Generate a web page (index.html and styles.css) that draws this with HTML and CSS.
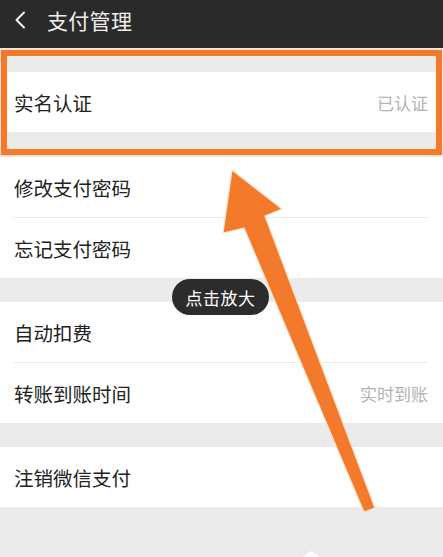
FILE: index.html
```html
<!DOCTYPE html>
<html lang="zh-CN">
<head>
<meta charset="utf-8">
<title>支付管理</title>
<link rel="stylesheet" href="styles.css">
</head>
<body>
<div class="page">
  <header class="header">
    <svg class="back" width="14" height="18" viewBox="0 0 14 18"><path d="M11 1.5 L3.5 9 L11 16.5" fill="none" stroke="#f2f2f2" stroke-width="2" stroke-linecap="round" stroke-linejoin="round"/></svg>
    <span class="title">支付管理</span>
  </header>

  <div class="gap"></div>
  <div class="group">
    <div class="row"><span>实名认证</span><span class="value">已认证</span></div>
  </div>

  <div class="gap gap-tall"></div>
  <div class="group">
    <div class="row"><span>修改支付密码</span></div>
    <div class="sep"></div>
    <div class="row"><span>忘记支付密码</span></div>
  </div>

  <div class="gap"></div>
  <div class="group">
    <div class="row"><span>自动扣费</span></div>
    <div class="sep"></div>
    <div class="row"><span>转账到账时间</span><span class="value">实时到账</span></div>
  </div>

  <div class="gap"></div>
  <div class="group">
    <div class="row"><span>注销微信支付</span></div>
  </div>

  <div class="highlight"></div>
  <div class="tooltip">点击放大</div>

  <svg class="arrow" width="443" height="557" viewBox="0 0 443 557">
    <path d="M232 170 L282 209 L265 216 L375 508 L364 512 L244 228 L223 233 Z" fill="#f47a2b" stroke="#fde2cc" stroke-width="1.2" stroke-linejoin="round"/>
    <path d="M303 557 L311 551 L320 557 Z" fill="#ffffff"/>
  </svg>
</div>
</body>
</html>
```

FILE: styles.css
```css
* { box-sizing: border-box; }

html, body {
  margin: 0;
  padding: 0;
}

body {
  background: #ebebeb;
  font-family: "Noto Sans CJK SC", "Noto Sans", sans-serif;
  width: 443px;
  height: 557px;
  overflow: hidden;
}

.page {
  position: relative;
  width: 443px;
  height: 557px;
  background: #ebebeb;
}

.header {
  height: 48px;
  background: #2a2a2a;
  display: flex;
  align-items: center;
  padding: 0 0 7px 13px;
  gap: 20px;
  border-bottom: 1px solid #1f1f1f;
}

.back {
  display: block;
  flex: none;
}

.title {
  color: #f0f0f0;
  font-size: 21px;
  letter-spacing: 0.3px;
  line-height: 1;
}

.gap {
  height: 24px;
}

.gap-tall {
  height: 25px;
}

.group {
  background: #ffffff;
}

.row {
  height: 60px;
  padding: 0 15px 0 14px;
  display: flex;
  align-items: center;
  justify-content: space-between;
  font-size: 19.5px;
  color: #222222;
}

.value {
  font-size: 17px;
  color: #b3b3b3;
}

.sep {
  height: 1px;
  margin: 0 15px 0 14px;
  background: #ececec;
}

.highlight {
  position: absolute;
  left: 1px;
  top: 50px;
  width: 441px;
  height: 105px;
  border: 6px solid #f47a2b;
  box-shadow: 0 0 2px 1px #fbd9bf, inset 0 0 2px #fbd9bf;
}

.tooltip {
  position: absolute;
  left: 172px;
  top: 279px;
  width: 97px;
  height: 36px;
  border-radius: 18px;
  background: #2c2c2c;
  color: #ffffff;
  font-size: 17px;
  display: flex;
  align-items: center;
  justify-content: center;
  letter-spacing: 0.5px;
}

.arrow {
  position: absolute;
  left: 0;
  top: 0;
  pointer-events: none;
}
```
